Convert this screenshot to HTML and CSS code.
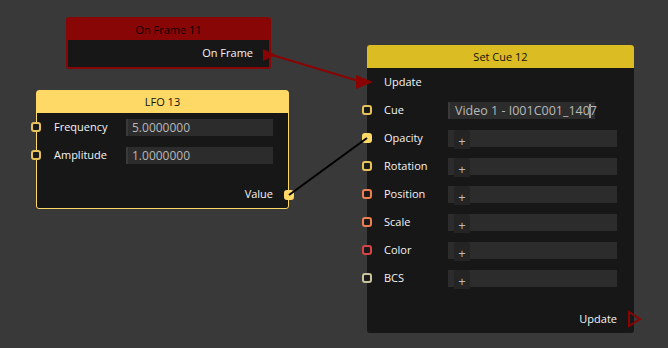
FILE: index.html
```html
<!DOCTYPE html>
<html lang="en">
<head>
    <meta charset="UTF-8">
    <title>Node Graph</title>
    <link rel="stylesheet" href="styles.css">
</head>
<body>
    <div class="canvas">
        <!-- On Frame 11 -->
        <div class="node node-event" style="left: 66px; top: 17px; width: 205px;">
            <div class="node-header">On Frame 11</div>
            <div class="node-body">
                <div class="row row-out">
                    <span class="label">On Frame</span>
                </div>
            </div>
        </div>

        <!-- LFO 13 -->
        <div class="node node-lfo" style="left: 36px; top: 90px; width: 253px;">
            <div class="node-header">LFO 13</div>
            <div class="node-body">
                <div class="row">
                    <span class="port port-yellow"></span>
                    <span class="label">Frequency</span>
                    <div class="field">5.0000000</div>
                </div>
                <div class="row">
                    <span class="port port-yellow"></span>
                    <span class="label">Amplitude</span>
                    <div class="field">1.0000000</div>
                </div>
                <div class="row row-out row-gap">
                    <span class="label">Value</span>
                    <span class="port port-out port-filled"></span>
                </div>
            </div>
        </div>

        <!-- Set Cue 12 -->
        <div class="node node-cue" style="left: 367px; top: 45px; width: 267px;">
            <div class="node-header">Set Cue 12</div>
            <div class="node-body">
                <div class="row">
                    <span class="label">Update</span>
                </div>
                <div class="row">
                    <span class="port port-yellow"></span>
                    <span class="label">Cue</span>
                    <div class="field field-text">
                        <span class="field-value">Video 1 - I001C001_1407</span>
                        <span class="caret"></span>
                    </div>
                </div>
                <div class="row">
                    <span class="port port-filled"></span>
                    <span class="label">Opacity</span>
                    <div class="field field-list"><span class="plus">+</span></div>
                </div>
                <div class="row">
                    <span class="port port-yellow"></span>
                    <span class="label">Rotation</span>
                    <div class="field field-list"><span class="plus">+</span></div>
                </div>
                <div class="row">
                    <span class="port port-orange"></span>
                    <span class="label">Position</span>
                    <div class="field field-list"><span class="plus">+</span></div>
                </div>
                <div class="row">
                    <span class="port port-orange"></span>
                    <span class="label">Scale</span>
                    <div class="field field-list"><span class="plus">+</span></div>
                </div>
                <div class="row">
                    <span class="port port-red"></span>
                    <span class="label">Color</span>
                    <div class="field field-list"><span class="plus">+</span></div>
                </div>
                <div class="row">
                    <span class="port port-khaki"></span>
                    <span class="label">BCS</span>
                    <div class="field field-list"><span class="plus">+</span></div>
                </div>
                <div class="row row-out row-gap-lg">
                    <span class="label">Update</span>
                </div>
            </div>
        </div>

        <!-- wires -->
        <svg class="wires" width="668" height="348" viewBox="0 0 668 348">
            <line x1="272" y1="55" x2="362" y2="82" stroke="#8a0303" stroke-width="2"/>
            <polygon points="263,49 276,55 263,61" fill="#8a0303"/>
            <polygon points="356,75 373,82 356,89" fill="#8a0303"/>
            <line x1="289" y1="195" x2="367" y2="138" stroke="#000" stroke-width="2"/>
            <polygon points="629,312 640,319 629,326" fill="none" stroke="#8a0303" stroke-width="2"/>
        </svg>
    </div>
</body>
</html>
```

FILE: styles.css
```css
html, body {
    margin: 0;
    padding: 0;
    background: #393939;
}
.canvas {
    position: relative;
    width: 668px;
    height: 348px;
    overflow: hidden;
    font-family: "Open Sans", "Noto Sans", sans-serif;
}
.node {
    position: absolute;
    background: #171717;
    border-radius: 3px;
    box-sizing: border-box;
}
.node-header {
    height: 23px;
    line-height: 23px;
    text-align: center;
    font-size: 11px;
    color: #111;
    border-radius: 3px 3px 0 0;
}
.node-event {
    border: 2px solid #880606;
}
.node-event .node-header {
    background: #880606;
    height: 21px;
    line-height: 21px;
    border-radius: 0;
    color: #0c0000;
}
.node-lfo {
    border: 1px solid #ffd966;
}
.node-lfo .node-header {
    background: #ffd966;
    height: 22px;
    line-height: 22px;
    border-radius: 0;
}
.node-cue .node-header {
    background: #dbbc22;
}
.node-body {
    display: flex;
    flex-direction: column;
}
.row {
    position: relative;
    height: 28px;
    display: flex;
    align-items: center;
    padding: 0 17px;
}
.node-lfo .row {
    padding: 0 15px 0 17px;
}
.row-out {
    justify-content: flex-end;
}
.node-event .row-out {
    padding-right: 16px;
    height: 27px;
}
.row-gap {
    margin-top: 11px;
}
.row-gap-lg {
    margin-top: 13px;
}
.label {
    font-size: 11px;
    color: #f4f4f4;
    width: 64px;
    flex: none;
    margin-top: -2px;
}
.node-lfo .label {
    width: 72px;
}
.node .row-out .label {
    width: auto;
}
.field {
    flex: 1;
    height: 17px;
    background: #2c2c2c;
    border-left: 2px solid #3a3a3a;
    box-sizing: border-box;
    font-size: 12px;
    color: #b8b8b8;
    line-height: 17px;
    padding-left: 4px;
}
.field-text {
    flex: none;
    width: 147px;
    position: relative;
    padding-left: 5px;
    font-size: 12.5px;
}
.field-value {
    white-space: nowrap;
}
.caret {
    position: absolute;
    left: 139px;
    top: 2px;
    width: 2px;
    height: 14px;
    background: #9a9a9a;
}
.field-list {
    border-left: none;
    padding-left: 6px;
}
.plus {
    display: inline-block;
    width: 16px;
    height: 19px;
    background: #242424;
    border-radius: 3px 3px 0 0;
    text-align: center;
    font-size: 13px;
    line-height: 23px;
    color: #bdbdbd;
    vertical-align: top;
}
.port {
    position: absolute;
    left: -5px;
    top: 9px;
    width: 10px;
    height: 10px;
    box-sizing: border-box;
    border-radius: 3px;
    border: 2px solid #e8c35a;
    background: #1a1a1a;
}
.node-lfo .port {
    left: -6px;
}
.node-lfo .port-out {
    left: auto;
    right: -6px;
    top: 10px;
}
.port-filled {
    background: #ffd966;
    border-color: #ffd966;
}
.port-yellow {
    border-color: #e8c35a;
}
.port-orange {
    border-color: #ef7e52;
}
.port-red {
    border-color: #d94545;
}
.port-khaki {
    border-color: #c9c49c;
}
.wires {
    position: absolute;
    left: 0;
    top: 0;
    pointer-events: none;
}
```
